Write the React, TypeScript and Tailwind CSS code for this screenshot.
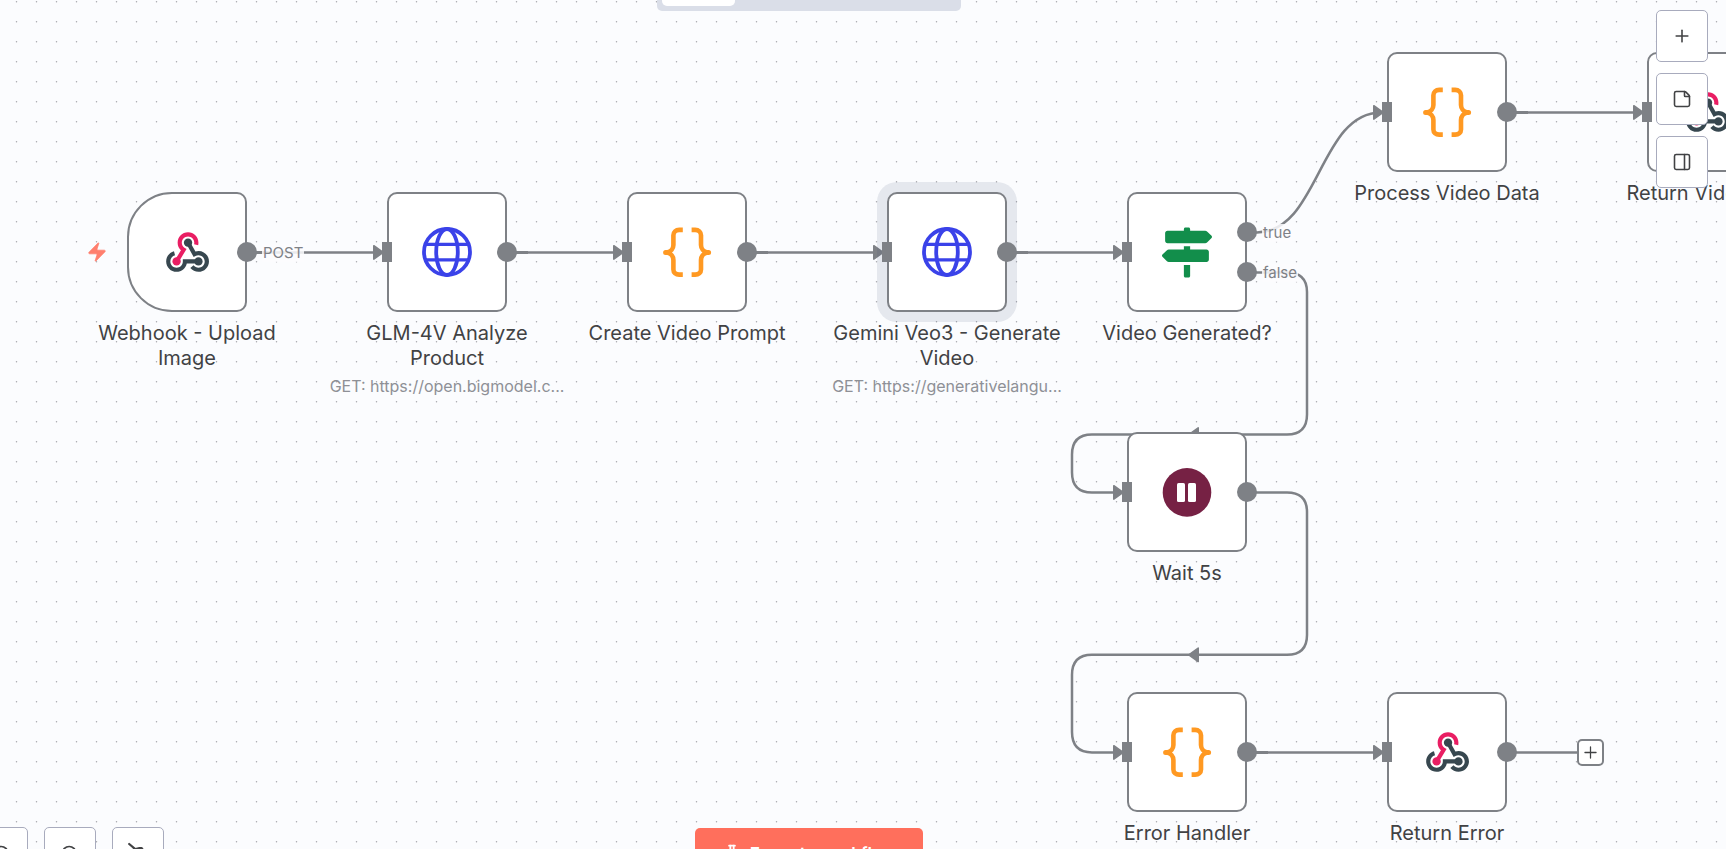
import type { ReactNode } from "react";
import { FlaskConical, PanelRight, Plus, StickyNote, ZoomIn, ZoomOut } from "lucide-react";

type IconKind = "webhook" | "globe" | "code" | "signs" | "pause";

interface FlowNode {
  id: string;
  x: number;
  y: number;
  icon: IconKind;
  label: string;
  subtitle?: string;
  trigger?: boolean;
  selected?: boolean;
  branches?: boolean;
}

const NODES: FlowNode[] = [
  { id: "webhook", x: 127, y: 192, icon: "webhook", label: "Webhook - Upload\nImage", trigger: true },
  {
    id: "glm",
    x: 387,
    y: 192,
    icon: "globe",
    label: "GLM-4V Analyze\nProduct",
    subtitle: "GET: https://open.bigmodel.c...",
  },
  { id: "prompt", x: 627, y: 192, icon: "code", label: "Create Video Prompt" },
  {
    id: "gemini",
    x: 887,
    y: 192,
    icon: "globe",
    label: "Gemini Veo3 - Generate\nVideo",
    subtitle: "GET: https://generativelangu...",
    selected: true,
  },
  { id: "if", x: 1127, y: 192, icon: "signs", label: "Video Generated?", branches: true },
  { id: "process", x: 1387, y: 52, icon: "code", label: "Process Video Data" },
  { id: "return", x: 1647, y: 52, icon: "webhook", label: "Return Video File" },
  { id: "wait", x: 1127, y: 432, icon: "pause", label: "Wait 5s" },
  { id: "error", x: 1127, y: 692, icon: "code", label: "Error Handler" },
  { id: "returnError", x: 1387, y: 692, icon: "webhook", label: "Return Error" },
];

const STRAIGHT_EDGES = [
  { from: 247, to: 383, y: 252 },
  { from: 507, to: 623, y: 252 },
  { from: 747, to: 883, y: 252 },
  { from: 1007, to: 1123, y: 252 },
  { from: 1507, to: 1643, y: 112 },
  { from: 1247, to: 1383, y: 752 },
];

const CURVED_EDGES = [
  "M1247 232.4 H1257 C1319 232.4 1319 112.4 1381 112.4",
  "M1247 272.4 H1287 Q1307 272.4 1307 292 V414.6 Q1307 434.6 1287 434.6 H1092 Q1072 434.6 1072 454.6 V472.4 Q1072 492.4 1092 492.4 H1121",
  "M1247 492.4 H1287 Q1307 492.4 1307 512 V635 Q1307 654.8 1287 654.8 H1092 Q1072 654.8 1072 675 V732 Q1072 752.4 1092 752.4 H1121",
];

const ARROWS = [
  [373, 252],
  [613, 252],
  [873, 252],
  [1113, 252],
  [1373, 112],
  [1633, 112],
  [1113, 492],
  [1113, 752],
  [1373, 752],
];

const BACK_ARROWS = [
  [1199, 434.6],
  [1199, 654.8],
];

function NodeIcon({ kind }: { kind: IconKind }) {
  if (kind === "webhook") {
    return (
      <svg viewBox="0 0 48 48" className="size-[50px]" aria-hidden="true">
        <path fill="#37474f" d="M35 37c-2.2 0-4-1.8-4-4s1.8-4 4-4 4 1.8 4 4-1.8 4-4 4z" />
        <path
          fill="#37474f"
          d="M35 43c-3 0-5.9-1.4-7.8-3.7l3.1-2.5c1.1 1.4 2.9 2.3 4.7 2.3 3.3 0 6-2.7 6-6s-2.7-6-6-6c-1 0-2 .3-2.9.7l-1.7 1L23.3 16l3.5-1.9 5.3 9.4c1-.3 2-.5 3-.5 5.5 0 10 4.5 10 10s-4.6 10-10.1 10z"
        />
        <path
          fill="#37474f"
          d="M14 43C8.5 43 4 38.5 4 33c0-4.6 3.1-8.5 7.5-9.7l1 3.9C9.9 27.9 8 30.3 8 33c0 3.3 2.7 6 6 6s6-2.7 6-6v-2h15v4H23.8c-.9 4.6-5 8-9.8 8z"
        />
        <circle cx="14" cy="33" r="4" fill="#e91e63" />
        <circle cx="25" cy="15" r="4" fill="#37474f" />
        <path
          fill="#e91e63"
          d="M15.7 34l-3.4-2 5.9-9.7c-2-1.9-3.2-4.5-3.2-7.3 0-5.5 4.5-10 10-10s10 4.5 10 10c0 .9-.1 1.7-.3 2.5l-3.9-1c.1-.5.2-1 .2-1.5 0-3.3-2.7-6-6-6s-6 2.7-6 6c0 2.1 1.1 4 2.9 5.1l1.7 1L15.7 34z"
        />
      </svg>
    );
  }
  if (kind === "globe") {
    return (
      <svg viewBox="0 0 50 50" className="size-[50px]" fill="none" stroke="#3a42e9" strokeWidth="3.8" aria-hidden="true">
        <circle cx="25" cy="25" r="23" />
        <ellipse cx="25" cy="25" rx="10.8" ry="23" />
        <path d="M3.5 17.4h43M3.5 32.9h43" strokeWidth="3.4" />
      </svg>
    );
  }
  if (kind === "code") {
    return (
      <svg
        viewBox="0 0 50 50"
        className="size-[50px]"
        fill="none"
        stroke="#ff9922"
        strokeWidth="4.6"
        strokeLinejoin="round"
        aria-hidden="true"
      >
        <path d="M20.8 2.9h-3.6c-3.4 0-5.8 2.2-5.8 5.4v9.6c0 3.6-2.6 6.6-6.2 7.5 3.6.9 6.2 3.9 6.2 7.5v9.6c0 3.2 2.4 5.1 5.8 5.1h3.6" />
        <path d="M29.6 2.9h3.6c3.4 0 5.8 2.2 5.8 5.4v9.6c0 3.6 2.6 6.6 6.2 7.5-3.6.9-6.2 3.9-6.2 7.5v9.6c0 3.2-2.4 5.1-5.8 5.1h-3.6" />
        <path d="M3.6 25.4h3M43.6 25.4h3" strokeWidth="5" strokeLinecap="round" />
      </svg>
    );
  }
  if (kind === "signs") {
    return (
      <svg viewBox="0 -6 512 512" className="size-[50px] overflow-visible" fill="#128e4b" aria-hidden="true">
        <path d="M507.31 84.69L464 41.37c-6-6-14.14-9.37-22.63-9.37H288V16c0-8.84-7.16-16-16-16h-32c-8.84 0-16 7.16-16 16v16H56c-13.25 0-24 10.75-24 24v80c0 13.25 10.75 24 24 24h385.37c8.49 0 16.62-3.37 22.63-9.37l43.31-43.31c6.25-6.26 6.25-16.38 0-22.63zM224 496c0 8.84 7.16 16 16 16h32c8.84 0 16-7.16 16-16V384h-64v112zm232-272H288v-32h-64v32H70.63c-8.49 0-16.62 3.37-22.63 9.37L4.69 276.69c-6.25 6.25-6.25 16.38 0 22.63L48 342.63c6 6 14.14 9.37 22.63 9.37H456c13.25 0 24-10.75 24-24v-80c0-13.25-10.75-24-24-24z" />
      </svg>
    );
  }
  return (
    <svg viewBox="0 0 50 50" className="size-[50px]" aria-hidden="true">
      <circle cx="25" cy="25.4" r="24.3" fill="#762144" />
      <rect x="15" y="16" width="8" height="19" rx="1.6" fill="#fff" />
      <rect x="26" y="16" width="8" height="19" rx="1.6" fill="#fff" />
    </svg>
  );
}

function Node({ node }: { node: FlowNode }) {
  const shape = node.trigger ? "rounded-l-[45px] rounded-r-[10px]" : "rounded-[10px]";
  const halo = node.selected ? "shadow-[0_0_0_10px_rgba(59,77,110,0.11)]" : "";
  return (
    <div className="absolute size-[120px]" style={{ left: node.x, top: node.y }}>
      <div
        className={`flex size-full items-center justify-center border-2 border-[#7e8186] bg-white ${shape} ${halo}`}
      >
        <NodeIcon kind={node.icon} />
      </div>
      {!node.trigger && <span className="absolute top-[50px] -left-[5px] h-5 w-[10px] bg-[#7e8186]" />}
      {node.branches ? (
        <>
          <span className="absolute top-[30px] -right-[10px] size-5 rounded-full bg-[#7e8186]" />
          <span className="absolute top-[70px] -right-[10px] size-5 rounded-full bg-[#7e8186]" />
        </>
      ) : (
        <span className="absolute top-[50px] -right-[10px] size-5 rounded-full bg-[#7e8186]" />
      )}
      <div className="absolute top-full left-1/2 flex w-[260px] -translate-x-1/2 flex-col gap-[3px] pt-[9px] text-center">
        <p className="text-[20px] leading-[25px] whitespace-pre-line text-[#414244]">{node.label}</p>
        {node.subtitle && <p className="text-[16px] leading-6 text-[#8e9096]">{node.subtitle}</p>}
      </div>
    </div>
  );
}

function EdgeLabel({ x, y, children }: { x: number; y: number; children: ReactNode }) {
  return (
    <span
      className="absolute -translate-y-1/2 bg-[#fbfcfe]/85 px-px text-[15px] leading-[18px] text-[#7e8186]"
      style={{ left: x, top: y }}
    >
      {children}
    </span>
  );
}

function SquareButton({ label, children }: { label: string; children: ReactNode }) {
  return (
    <button
      type="button"
      aria-label={label}
      className="flex size-[52px] items-center justify-center rounded-[5px] border border-[#a8abbd] bg-white text-[#414244]"
    >
      {children}
    </button>
  );
}

export default function App() {
  return (
    <main className="relative h-screen w-full overflow-hidden bg-[#fbfcfe] font-['Inter','Liberation_Sans',sans-serif]">
      <svg className="absolute inset-0 size-full" aria-hidden="true">
        <defs>
          <pattern id="dots" x="6" y="12" width="20" height="20" patternUnits="userSpaceOnUse">
            <circle cx="10.5" cy="9.7" r="0.75" fill="#a5a6ab" />
          </pattern>
        </defs>
        <rect width="100%" height="100%" fill="url(#dots)" />
        <g fill="none" stroke="#7e8186" strokeWidth="2.5">
          {STRAIGHT_EDGES.map((e) => (
            <path key={`${e.from}-${e.y}`} d={`M${e.from} ${e.y}.4H${e.to}`} />
          ))}
          {STRAIGHT_EDGES.map((e) => (
            <path key={`stub-${e.from}-${e.y}`} d={`M${e.from} ${e.y}.5h21`} strokeWidth="3" />
          ))}
          {CURVED_EDGES.map((d) => (
            <path key={d} d={d} />
          ))}
          <path d="M1507 752.4H1577" />
        </g>
        <g fill="#7e8186" stroke="#7e8186" strokeWidth="1.6" strokeLinejoin="round">
          {ARROWS.map(([x, y]) => (
            <path key={`${x}-${y}`} d={`M${x + 0.8} ${y - 6.3}l9.4 6.7-9.4 6.7z`} />
          ))}
          {BACK_ARROWS.map(([x, y]) => (
            <path key={`${x}-${y}`} d={`M${x - 0.8} ${y - 6.7}l-9.4 6.7 9.4 6.7z`} />
          ))}
        </g>
      </svg>

      <EdgeLabel x={262} y={253}>POST</EdgeLabel>
      <EdgeLabel x={1262} y={233}>true</EdgeLabel>
      <EdgeLabel x={1262} y={273}>false</EdgeLabel>

      {NODES.map((n) => (
        <Node key={n.id} node={n} />
      ))}

      <svg viewBox="0 0 24 24" className="absolute top-[241px] left-[86px] size-[22px]" fill="#ff7f6e" aria-hidden="true">
        <path
          stroke="#ff7f6e"
          strokeWidth="0.8"
          d="M4 14a1 1 0 0 1-.78-1.63l9.9-10.2a.5.5 0 0 1 .86.46l-1.92 6.02A1 1 0 0 0 13 10h7a1 1 0 0 1 .78 1.63l-9.9 10.2a.5.5 0 0 1-.86-.46l1.92-6.02A1 1 0 0 0 11 14z"
        />
      </svg>

      <button
        type="button"
        aria-label="Add node"
        className="absolute top-[739px] left-[1577px] flex size-[27px] items-center justify-center rounded-[5px] border-2 border-[#7e8186] bg-white text-[#414244]"
      >
        <Plus size={19} strokeWidth={1.6} className="shrink-0" />
      </button>

      <div className="absolute -top-[29px] left-[657px] flex h-10 w-[304px] gap-1 rounded-[5px] bg-[#dadee8] p-[5px]">
        <button type="button" aria-label="Editor" className="w-[73px] rounded-[5px] bg-white" />
        <button type="button" aria-label="Executions" className="flex-1 rounded-[5px]" />
      </div>

      <div className="absolute top-[10px] right-[18px] flex flex-col gap-[11px]">
        <SquareButton label="Add node">
          <Plus size={20} strokeWidth={1.9} />
        </SquareButton>
        <SquareButton label="Add sticky note">
          <StickyNote size={20} strokeWidth={1.9} />
        </SquareButton>
        <SquareButton label="Open panel">
          <PanelRight size={20} strokeWidth={1.9} />
        </SquareButton>
      </div>

      <div className="absolute top-[827px] -left-[24px] flex gap-4">
        <SquareButton label="Zoom in">
          <ZoomIn size={20} strokeWidth={2} className="mt-[2px]" />
        </SquareButton>
        <SquareButton label="Zoom out">
          <ZoomOut size={20} strokeWidth={2} className="mt-[2px]" />
        </SquareButton>
        <SquareButton label="Tidy up">
          <svg
            viewBox="0 0 24 24"
            className="size-6"
            fill="none"
            stroke="currentColor"
            strokeWidth="2.2"
            strokeLinecap="round"
            strokeLinejoin="round"
            aria-hidden="true"
          >
            <path d="M3.2 3l7.6 6.4M7.5 8.6l6-1.6h2l4.5 6-6 8-9-5z" />
          </svg>
        </SquareButton>
      </div>

      <button
        type="button"
        className="absolute top-[828px] left-[695px] flex h-[52px] w-[228px] items-center justify-center gap-2 rounded-[5px] bg-[#ff6f5c] text-[17px] leading-6 font-semibold text-white"
      >
        <FlaskConical size={20} strokeWidth={2.2} />
        Execute workflow
      </button>
    </main>
  );
}
